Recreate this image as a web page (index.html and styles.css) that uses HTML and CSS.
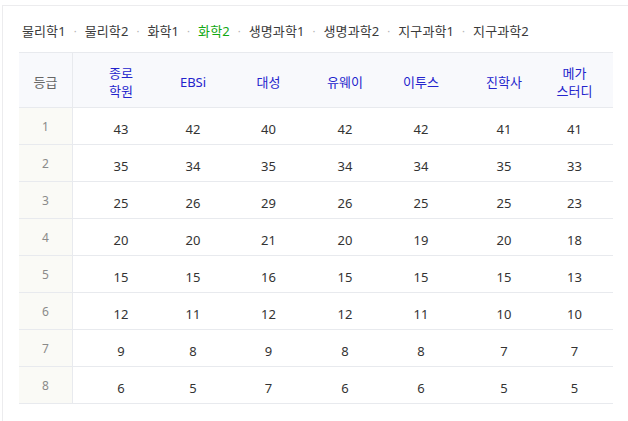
FILE: index.html
```html
<!DOCTYPE html>
<html lang="ko">
<head>
<meta charset="utf-8">
<title>등급컷</title>
<link rel="stylesheet" href="styles.css">
</head>
<body>
<div class="panel">
  <div class="tabs">
    <span class="tab">물리학1</span><span class="sep">·</span>
    <span class="tab">물리학2</span><span class="sep">·</span>
    <span class="tab">화학1</span><span class="sep">·</span>
    <span class="tab active">화학2</span><span class="sep">·</span>
    <span class="tab">생명과학1</span><span class="sep">·</span>
    <span class="tab">생명과학2</span><span class="sep">·</span>
    <span class="tab">지구과학1</span><span class="sep">·</span>
    <span class="tab">지구과학2</span>
  </div>
  <table class="grades">
    <colgroup>
      <col class="c-grade"><col class="c1"><col class="c2"><col class="c3"><col class="c4"><col class="c5"><col class="c6"><col class="c7">
    </colgroup>
    <thead>
      <tr>
        <th class="grade-h">등급</th>
        <th>종로<br>학원</th>
        <th>EBSi</th>
        <th>대성</th>
        <th>유웨이</th>
        <th>이투스</th>
        <th>진학사</th>
        <th>메가<br>스터디</th>
      </tr>
    </thead>
    <tbody>
      <tr><td class="grade">1</td><td>43</td><td>42</td><td>40</td><td>42</td><td>42</td><td>41</td><td>41</td></tr>
      <tr><td class="grade">2</td><td>35</td><td>34</td><td>35</td><td>34</td><td>34</td><td>35</td><td>33</td></tr>
      <tr><td class="grade">3</td><td>25</td><td>26</td><td>29</td><td>26</td><td>25</td><td>25</td><td>23</td></tr>
      <tr><td class="grade">4</td><td>20</td><td>20</td><td>21</td><td>20</td><td>19</td><td>20</td><td>18</td></tr>
      <tr><td class="grade">5</td><td>15</td><td>15</td><td>16</td><td>15</td><td>15</td><td>15</td><td>13</td></tr>
      <tr><td class="grade">6</td><td>12</td><td>11</td><td>12</td><td>12</td><td>11</td><td>10</td><td>10</td></tr>
      <tr><td class="grade">7</td><td>9</td><td>8</td><td>9</td><td>8</td><td>8</td><td>7</td><td>7</td></tr>
      <tr><td class="grade">8</td><td>6</td><td>5</td><td>7</td><td>6</td><td>6</td><td>5</td><td>5</td></tr>
    </tbody>
  </table>
</div>
</body>
</html>
```

FILE: styles.css
```css
html, body {
  margin: 0;
  padding: 0;
  background: #ffffff;
}
body {
  font-family: "Noto Sans", "Noto Sans CJK KR", sans-serif;
  font-size: 13px;
  color: #333;
}
.panel {
  margin: 5px 0 0 2px;
  height: 416px;
  border-top: 1px solid #ececee;
  border-left: 1px solid #ececee;
  padding: 15px 0 0 16px;
  box-sizing: border-box;
}
.tabs {
  display: flex;
  align-items: center;
  height: 20px;
  line-height: 20px;
  padding-left: 3px;
  margin-bottom: 11px;
  white-space: nowrap;
  letter-spacing: 0.1px;
}
.tab {
  color: #3a3a3a;
}
.tab.active {
  color: #12a812;
}
.sep {
  display: inline-block;
  width: 19px;
  text-align: center;
  color: #b4b4b4;
  font-size: 11px;
}
.grades {
  width: 594px;
  table-layout: fixed;
  border-collapse: separate;
  border-spacing: 0;
}
.c-grade { width: 54px; }
.c1 { width: 96px; }
.c2 { width: 48px; }
.c3 { width: 103px; }
.c4 { width: 50px; }
.c5 { width: 102px; }
.c6 { width: 64px; }
.c7 { width: 77px; }
.grades th {
  background: #f8f9fc;
  border-top: 1px solid #e8eaee;
  border-bottom: 1px solid #e8eaee;
  height: 56px;
  padding: 4px 0 0;
  box-sizing: border-box;
  font-weight: normal;
  color: #2424cc;
  line-height: 18px;
  text-align: center;
  vertical-align: middle;
}
.grades th.grade-h {
  color: #666;
  border-right: 1px solid #e8eaee;
}
.grades td {
  height: 37px;
  box-sizing: border-box;
  border-bottom: 1px solid #e8eaee;
  padding: 6px 0 0;
  text-align: center;
  vertical-align: middle;
  color: #333;
  line-height: 18px;
}
.grades td.grade {
  background: #fafaf6;
  border-right: 1px solid #e8eaee;
  color: #8a8a8a;
  font-size: 12px;
  padding-top: 2px;
}
```
